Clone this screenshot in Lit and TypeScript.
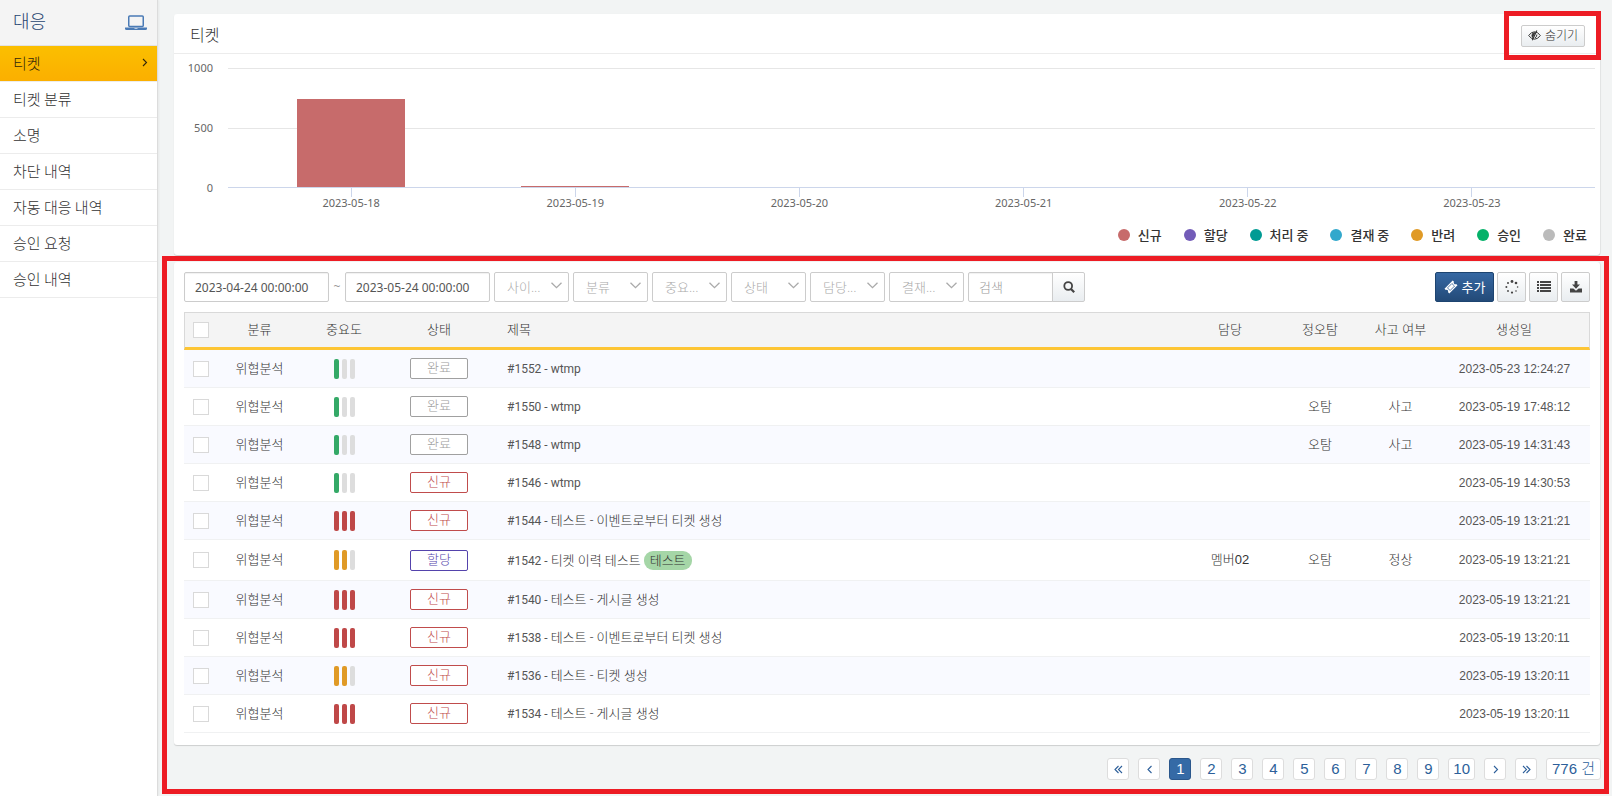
import { LitElement, html, css, svg } from "lit";
import { customElement, state } from "lit/decorators.js";
import { classMap } from "lit/directives/class-map.js";
import { styleMap } from "lit/directives/style-map.js";

type Status = "done" | "new" | "assigned";

interface Ticket {
  id: number;
  level: 1 | 2 | 3;
  status: Status;
  title: string;
  tag?: string;
  owner?: string;
  verdict?: string;
  incident?: string;
  created: string;
}

const MENU = ["티켓", "티켓 분류", "소명", "차단 내역", "자동 대응 내역", "승인 요청", "승인 내역"];

const FILTERS = ["사이...", "분류", "중요...", "상태", "담당...", "결재..."];

const STATUS_LABEL: Record<Status, string> = { done: "완료", new: "신규", assigned: "할당" };

const LEGEND = [
  ["신규", "#c76b6b"],
  ["할당", "#735cb8"],
  ["처리 중", "#009b94"],
  ["결재 중", "#32a8cc"],
  ["반려", "#e09a26"],
  ["승인", "#05b169"],
  ["완료", "#bbbbbb"],
];

const AXIS_MAX = 1000;

const DAILY = [
  { day: "2023-05-18", count: 740 },
  { day: "2023-05-19", count: 10 },
  { day: "2023-05-20", count: 0 },
  { day: "2023-05-21", count: 0 },
  { day: "2023-05-22", count: 0 },
  { day: "2023-05-23", count: 0 },
];

const TICKETS: Ticket[] = [
  { id: 1552, level: 1, status: "done", title: "wtmp", created: "2023-05-23 12:24:27" },
  { id: 1550, level: 1, status: "done", title: "wtmp", verdict: "오탐", incident: "사고", created: "2023-05-19 17:48:12" },
  { id: 1548, level: 1, status: "done", title: "wtmp", verdict: "오탐", incident: "사고", created: "2023-05-19 14:31:43" },
  { id: 1546, level: 1, status: "new", title: "wtmp", created: "2023-05-19 14:30:53" },
  { id: 1544, level: 3, status: "new", title: "테스트 - 이벤트로부터 티켓 생성", created: "2023-05-19 13:21:21" },
  { id: 1542, level: 2, status: "assigned", title: "티켓 이력 테스트", tag: "테스트", owner: "멤버02", verdict: "오탐", incident: "정상", created: "2023-05-19 13:21:21" },
  { id: 1540, level: 3, status: "new", title: "테스트 - 게시글 생성", created: "2023-05-19 13:21:21" },
  { id: 1538, level: 3, status: "new", title: "테스트 - 이벤트로부터 티켓 생성", created: "2023-05-19 13:20:11" },
  { id: 1536, level: 2, status: "new", title: "테스트 - 티켓 생성", created: "2023-05-19 13:20:11" },
  { id: 1534, level: 3, status: "new", title: "테스트 - 게시글 생성", created: "2023-05-19 13:20:11" },
];

const HANGUL = /[가-힣]/;

const chevron = (path: string, size = 9) => html`
  <svg width=${size} height=${size} viewBox="0 0 9 9" fill="none" stroke="currentColor" stroke-width="1.1">
    <path d=${path}></path>
  </svg>`;

const laptopIcon = html`
  <svg width="22" height="16" viewBox="0 0 22 16" fill="none" stroke="#4a7ab5">
    <rect x="3.75" y="1" width="14.5" height="10.5" rx="1" stroke-width="1.5"></rect>
    <path d="M0 12.5h22v1q0 1.5-1.500 1.500H1.500Q0 15 0 13.500z" fill="#4a7ab5" stroke="none"></path>
    <path d="M9.500 13.500h3" stroke="#b9cbe2"></path>
  </svg>`;

const eyeSlashIcon = html`
  <svg width="13" height="11" viewBox="0 0 13 11" fill="none" stroke="currentColor">
    <path d="M.7 5.500Q3.200 1.800 6.500 1.800T12.300 5.500Q9.800 9.200 6.500 9.200T.7 5.500z" stroke-width="1"></path>
    <path d="M7 2.600 4.500 7.600Q3.300 5.500 4.500 3.500z" fill="currentColor" stroke-width=".8"></path>
    <path d="M8.900 4.500Q9 7 6.800 8" stroke-width="1"></path>
    <path d="M8.900 .5 4.300 10.300" stroke-width="1.100"></path>
  </svg>`;

const searchIcon = html`
  <svg width="12" height="12" viewBox="0 0 12 12" fill="none" stroke="currentColor" stroke-width="1.8">
    <circle cx="5.200" cy="5" r="3.900"></circle>
    <path d="M8 8l3.200 3.200" stroke-width="2.200"></path>
  </svg>`;

const ticketIcon = html`
  <svg width="14" height="14" viewBox="0 0 14 14">
    <path fill="currentColor" d="M8.700.5 10 1.800a1.500 1.500 0 0 0 2.100 2.100L13.500 5.300 5.300 13.500 3.900 12.100A1.500 1.500 0 0 0 1.800 10L.5 8.700z"></path>
    <path d="M7.900 3.500l2.600 2.600-4.400 4.400-2.600-2.600z" fill="none" stroke="#2c5a90" stroke-width=".8"></path>
  </svg>`;

const spinnerIcon = html`
  <svg width="14" height="14" viewBox="0 0 14 14" fill="currentColor">
    ${[
      [7, 1.5, 1.4], [11, 3, 1.3], [12.600, 7, 0.8], [11, 11, 0.8],
      [7, 12.600, 1.1], [3, 11, 0.9], [1.400, 7, 1], [3, 3, 1],
    ].map(([x, y, r]) => svg`<circle cx=${x} cy=${y} r=${r}></circle>`)}
  </svg>`;

const listIcon = html`
  <svg width="14" height="12" viewBox="0 0 14 12" fill="currentColor">
    <path d="M0 0h2v2H0zM3 0h11v2H3zM0 3h2v2H0zM3 3h11v2H3zM0 6h2v2H0zM3 6h11v2H3zM0 9h2v2H0zM3 9h11v2H3z"></path>
  </svg>`;

const downloadIcon = html`
  <svg width="12" height="12" viewBox="0 0 12 12" fill="currentColor">
    <path d="M4.600 0h2.800v3.600H10L6 7.800 2 3.600h2.600z"></path>
    <path d="M0 7.600h3.400L6 9.800l2.600-2.200H12v3.900H0z"></path>
  </svg>`;

@customElement("app-root")
export class AppRoot extends LitElement {
  @state() private page = 1;
  @state() private chartHidden = false;
  @state() private selected = new Set<number>();

  static styles = css`
    :host {
      --line: #ececec;
      --mark: #ed1c24;
      display: flex;
      min-height: 100vh;
      background: #f2f4f4;
      color: #555;
      font: 12px/16px "Noto Sans", "Noto Sans CJK KR", sans-serif;
    }
    * { box-sizing: border-box; }
    svg { display: block; flex: none; }
    button, input, select { font: inherit; color: inherit; margin: 0; }
    button { cursor: pointer; }

    .side {
      flex: none;
      width: 158px;
      background: #fff;
      border-right: 1px solid #dcdcdc;
      box-shadow: 1px 0 2px #0000000d;
      font-family: "Noto Sans CJK KR", sans-serif;
    }
    .side-head {
      display: flex;
      justify-content: space-between;
      align-items: center;
      height: 46px;
      padding: 0 10px 6px 13px;
      background: #f4f4f4;
      border-bottom: 1px solid #e2e2e2;
    }
    .side-head h1 { margin: 0; font-size: 18px; line-height: 24px; font-weight: 300; color: #1f4470; }
    .side-head svg { margin-top: 6px; }
    .side ul { list-style: none; margin: 0; padding: 0; }
    .side a {
      display: flex;
      justify-content: space-between;
      align-items: center;
      height: 36px;
      padding: 0 8px 2px 13px;
      border-bottom: 1px solid var(--line);
      color: #333;
      font-size: 15px;
      font-weight: 300;
      text-decoration: none;
    }
    .side a.on { background: linear-gradient(#fbbf00, #fbaf00); color: #33270a; }

    main { flex: 1; min-width: 0; padding: 14px 12px 0 16px; }
    .card {
      background: #fff;
      border-radius: 3px;
      box-shadow: 0 1px 1px #00000026, 1px 0 1px #0000000f;
    }
    .card-head {
      position: relative;
      display: flex;
      justify-content: space-between;
      align-items: center;
      height: 40px;
      padding: 0 15px 0 16px;
      border-bottom: 1px solid var(--line);
    }
    .card-head h2 { margin: 0; color: #333; font: 300 16px/24px "Noto Sans CJK KR", sans-serif; }
    .btn {
      display: inline-flex;
      align-items: center;
      justify-content: center;
      gap: 4px;
      padding: 0;
      border: 1px solid #ccc;
      border-radius: 2px;
      background: linear-gradient(#fff, #e9edf0);
      color: #444;
    }
    .hide { width: 64px; height: 22px; margin-top: 4px; color: #333; font-weight: 300; }

    .mark {
      position: absolute;
      border: 5px solid var(--mark);
      pointer-events: none;
    }
    .mark.small { inset: -3px -1px -7px auto; width: 97px; }
    .mark.large { inset: -6px -9px -14px -12px; }

    .chart {
      display: grid;
      grid-template-columns: 39px 1fr;
      column-gap: 15px;
      padding: 6px 5px 0 0;
      color: #666;
      font-size: 11px;
    }
    .y-axis {
      display: flex;
      flex-direction: column;
      justify-content: space-between;
      height: 136px;
      text-align: right;
    }
    .plot { display: grid; align-self: start; margin-top: 8px; height: 120px; }
    .bands, .bars { grid-area: 1 / 1; display: flex; }
    .bands { flex-direction: column; border-bottom: 1px solid #ccd6eb; }
    .band { flex: 1; border-top: 1px solid #e6e6e6; }
    .bars, .x-axis { padding: 0 11px; }
    .bars { align-items: flex-end; justify-content: space-around; padding-bottom: 1px; }
    .bar { width: 8%; background: #c76b6b; }
    .x-axis { grid-column: 2; display: flex; height: 20px; margin-top: -8px; }
    .day { flex: 1; display: flex; flex-direction: column; align-items: center; }
    .day::before { content: ""; flex: none; height: 9px; border-left: 1px solid #ccd6eb; }
    .day span { line-height: 11px; }
    .legend {
      display: flex;
      justify-content: flex-end;
      gap: 22px;
      list-style: none;
      margin: 0;
      padding: 17px 13px 10px;
      color: #333;
      font: 500 13px/20px "Noto Sans CJK KR", sans-serif;
    }
    .legend li { display: flex; align-items: center; gap: 8px; }
    .dot { width: 12px; height: 12px; border-radius: 50%; }

    .listing { position: relative; margin-top: 7px; }
    .list { padding: 10px 10px 12px; }
    .toolbar { display: flex; align-items: center; gap: 4px; margin-bottom: 10px; }
    .toolbar input, .toolbar select {
      height: 30px;
      border: 1px solid #ccc;
      border-radius: 2px;
      background: #fff;
      outline: none;
    }
    .toolbar input { padding: 0 10px; box-shadow: inset 0 1px 1px #0000000f; }
    .date { width: 145px; }
    .tilde { width: 8px; text-align: center; color: #999; }
    .pick { display: grid; align-items: center; width: 75px; color: #aaa; }
    .pick select, .pick svg { grid-area: 1 / 1; }
    .pick select { appearance: none; width: 100%; padding: 0 12px; color: #aaa; font-size: 13px; font-weight: 300; }
    .pick svg { justify-self: end; margin: 0 7px 4px 0; pointer-events: none; }
    .search { display: flex; }
    .search input { width: 85px; border-radius: 2px 0 0 2px; font-size: 13px; }
    .search input::placeholder { color: #999; font-weight: 300; }
    .search .btn { width: 33px; margin-left: -1px; border-radius: 0 2px 2px 0; }
    .actions { display: flex; gap: 3px; margin-left: auto; }
    .actions .btn { width: 29px; height: 30px; }
    .actions .add {
      width: 59px;
      border-color: #1d4470;
      background: linear-gradient(#3668a3, #234a78);
      color: #fff;
      font-size: 13px;
    }

    table { width: 100%; table-layout: fixed; border-collapse: separate; border-spacing: 0; }
    th, td { padding: 0; text-align: center; font-weight: 300; }
    th, .kr { font-family: "Liberation Sans", "Noto Sans CJK KR", sans-serif; font-size: 13px; color: #333; }
    th {
      height: 38px;
      background: #f4f4f4;
      border-top: 1px solid #d9d9d9;
      border-bottom: 3px solid #fdc534;
    }
    th:first-child { border-left: 1px solid #d9d9d9; }
    th:last-child { border-right: 1px solid #d9d9d9; }
    td { height: 38px; border-bottom: 1px solid #f0f1f2; }
    tbody tr:nth-child(odd) { background: #f9faff; }
    .c-check { width: 34px; padding-left: 9px; text-align: left; }
    th.c-check { padding-left: 8px; }
    .c-kind { width: 83px; }
    .c-level { width: 86px; }
    .c-status { width: 104px; }
    .c-title { padding-left: 16px; text-align: left; }
    td.c-title { font: 12px/16px Roboto, "Noto Sans CJK KR", sans-serif; }
    td.c-title .kr { font-family: inherit; font-weight: 300; }
    .c-owner, .c-verdict { width: 90px; }
    .c-incident { width: 71px; }
    .c-created { width: 154px; padding-left: 3px; }
    td.c-created { font-family: "Liberation Sans", sans-serif; font-weight: 400; }
    .check {
      appearance: none;
      display: block;
      width: 16px;
      height: 16px;
      background: #fff;
      border: 1px solid #d9d9d9;
    }
    .check:checked { background: #336aa6; }
    .level { display: flex; justify-content: center; gap: 3px; }
    .level i { width: 5px; height: 20px; border-radius: 2px; background: #ddd; }
    .l1 .lit { background: #34a967; }
    .l2 .lit { background: #e09a26; }
    .l3 .lit { background: #bf4848; }
    .status {
      display: block;
      width: 58px;
      height: 21px;
      margin: 0 auto;
      border: 1px solid;
      border-radius: 2px;
      background: #fff;
      font-size: 13px;
      line-height: 17px;
    }
    .status.done { color: #a0a0a0; }
    .status.new { color: #c04c4c; }
    .status.assigned { color: #5443ac; }
    .tag {
      display: inline-block;
      padding: 1px 6px;
      border-radius: 9px;
      background: #a5d6a7;
      line-height: 17px;
    }
    tr.tagged td { height: 41px; }

    .pages {
      display: flex;
      justify-content: flex-end;
      gap: 9px;
      margin: 13px -1px 0 0;
      font: 300 15px/20px "Liberation Sans", "Noto Sans CJK KR", sans-serif;
      color: #2d5f9a;
    }
    .pages button, .total {
      display: grid;
      place-items: center;
      min-width: 22px;
      height: 22px;
      padding: 0 5px;
      border: 1px solid #ddd;
      border-radius: 3px;
      background: #fff;
    }
    .pages button { padding: 0 4px; }
    .pages .on { background: #356aa6; border-color: #2a578c; color: #fff; }
  `;

  private toggle(id: number) {
    const next = new Set(this.selected);
    next.has(id) ? next.delete(id) : next.add(id);
    this.selected = next;
  }

  private toggleAll() {
    this.selected =
      this.selected.size === TICKETS.length ? new Set() : new Set(TICKETS.map((t) => t.id));
  }

  private renderSide() {
    return html`
      <nav class="side" aria-label="대응">
        <div class="side-head"><h1>대응</h1>${laptopIcon}</div>
        <ul>
          ${MENU.map((name, i) => html`
            <li>
              <a href="#" class=${classMap({ on: i === 0 })}>
                ${name}${i === 0 ? chevron("M3 1l3.500 3.500L3 8") : ""}
              </a>
            </li>`)}
        </ul>
      </nav>`;
  }

  private renderChart() {
    return html`
      <div class="chart">
        <div class="y-axis"><span>1000</span><span>500</span><span>0</span></div>
        <div class="plot">
          <div class="bands"><div class="band"></div><div class="band"></div></div>
          <div class="bars">
            ${DAILY.map((d) => html`
              <div class="bar" style=${styleMap({ height: `${(d.count / AXIS_MAX) * 100}%` })}></div>`)}
          </div>
        </div>
        <div class="x-axis">
          ${DAILY.map((d) => html`<div class="day"><span>${d.day}</span></div>`)}
        </div>
      </div>
      <ul class="legend">
        ${LEGEND.map(([name, color]) => html`
          <li><span class="dot" style=${styleMap({ background: color })}></span>${name}</li>`)}
      </ul>`;
  }

  private renderToolbar() {
    return html`
      <div class="toolbar">
        <input class="date" aria-label="시작" .value=${"2023-04-24 00:00:00"} />
        <span class="tilde">~</span>
        <input class="date" aria-label="종료" .value=${"2023-05-24 00:00:00"} />
        ${FILTERS.map((name) => html`
          <label class="pick">
            <select aria-label=${name}><option>${name}</option></select>
            <svg width="11" height="7" viewBox="0 0 11 7" fill="none" stroke="currentColor" stroke-width="1.300">
              <path d="M.5.700 5.500 5.700 10.500.700"></path>
            </svg>
          </label>`)}
        <div class="search">
          <input placeholder="검색" aria-label="검색" />
          <button class="btn" aria-label="검색">${searchIcon}</button>
        </div>
        <div class="actions">
          <button class="btn add">${ticketIcon}추가</button>
          <button class="btn" aria-label="처리">${spinnerIcon}</button>
          <button class="btn" aria-label="목록">${listIcon}</button>
          <button class="btn" aria-label="다운로드">${downloadIcon}</button>
        </div>
      </div>`;
  }

  private renderRow(t: Ticket) {
    return html`
      <tr class=${classMap({ tagged: !!t.tag })}>
        <td class="c-check">
          <input class="check" type="checkbox" aria-label="#${t.id}"
            .checked=${this.selected.has(t.id)} @change=${() => this.toggle(t.id)} />
        </td>
        <td class="kr">위협분석</td>
        <td>
          <div class="level l${t.level}">
            ${[1, 2, 3].map((n) => html`<i class=${classMap({ lit: n <= t.level })}></i>`)}
          </div>
        </td>
        <td><span class="status ${t.status}">${STATUS_LABEL[t.status]}</span></td>
        <td class="c-title">
          #${t.id} - <span class=${classMap({ kr: HANGUL.test(t.title) })}>${t.title}</span>
          ${t.tag ? html`<span class="tag kr">${t.tag}</span>` : ""}
        </td>
        <td class="kr">${t.owner}</td>
        <td class="kr">${t.verdict}</td>
        <td class="kr">${t.incident}</td>
        <td class="c-created">${t.created}</td>
      </tr>`;
  }

  private renderTable() {
    return html`
      <table>
        <thead>
          <tr>
            <th class="c-check">
              <input class="check" type="checkbox" aria-label="전체"
                .checked=${this.selected.size === TICKETS.length} @change=${this.toggleAll} />
            </th>
            <th class="c-kind">분류</th>
            <th class="c-level">중요도</th>
            <th class="c-status">상태</th>
            <th class="c-title">제목</th>
            <th class="c-owner">담당</th>
            <th class="c-verdict">정오탐</th>
            <th class="c-incident">사고 여부</th>
            <th class="c-created">생성일</th>
          </tr>
        </thead>
        <tbody>${TICKETS.map((t) => this.renderRow(t))}</tbody>
      </table>`;
  }

  private renderPages() {
    const go = (p: number) => () => (this.page = Math.min(10, Math.max(1, p)));
    const left = "M6.500 1 3 4.500 6.500 8";
    const right = "M3 1l3.500 3.500L3 8";
    const doubleLeft = "M4.500 1 1 4.500 4.500 8M8 1 4.500 4.500 8 8";
    const doubleRight = "M1 1l3.500 3.500L1 8M4.500 1 8 4.500 4.500 8";
    return html`
      <nav class="pages" aria-label="페이지">
        <button aria-label="처음" @click=${go(1)}>${chevron(doubleLeft)}</button>
        <button aria-label="이전" @click=${go(this.page - 1)}>${chevron(left)}</button>
        ${[1, 2, 3, 4, 5, 6, 7, 8, 9, 10].map((n) => html`
          <button class=${classMap({ on: n === this.page })} @click=${go(n)}>${n}</button>`)}
        <button aria-label="다음" @click=${go(this.page + 1)}>${chevron(right)}</button>
        <button aria-label="마지막" @click=${go(10)}>${chevron(doubleRight)}</button>
        <span class="total">776 건</span>
      </nav>`;
  }

  render() {
    return html`
      ${this.renderSide()}
      <main>
        <section class="card">
          <header class="card-head">
            <h2>티켓</h2>
            <button class="btn hide" @click=${() => (this.chartHidden = !this.chartHidden)}>
              ${eyeSlashIcon}숨기기
            </button>
            <div class="mark small"></div>
          </header>
          ${this.chartHidden ? "" : this.renderChart()}
        </section>
        <section class="listing">
          <div class="card list">${this.renderToolbar()}${this.renderTable()}</div>
          ${this.renderPages()}
          <div class="mark large"></div>
        </section>
      </main>`;
  }
}
